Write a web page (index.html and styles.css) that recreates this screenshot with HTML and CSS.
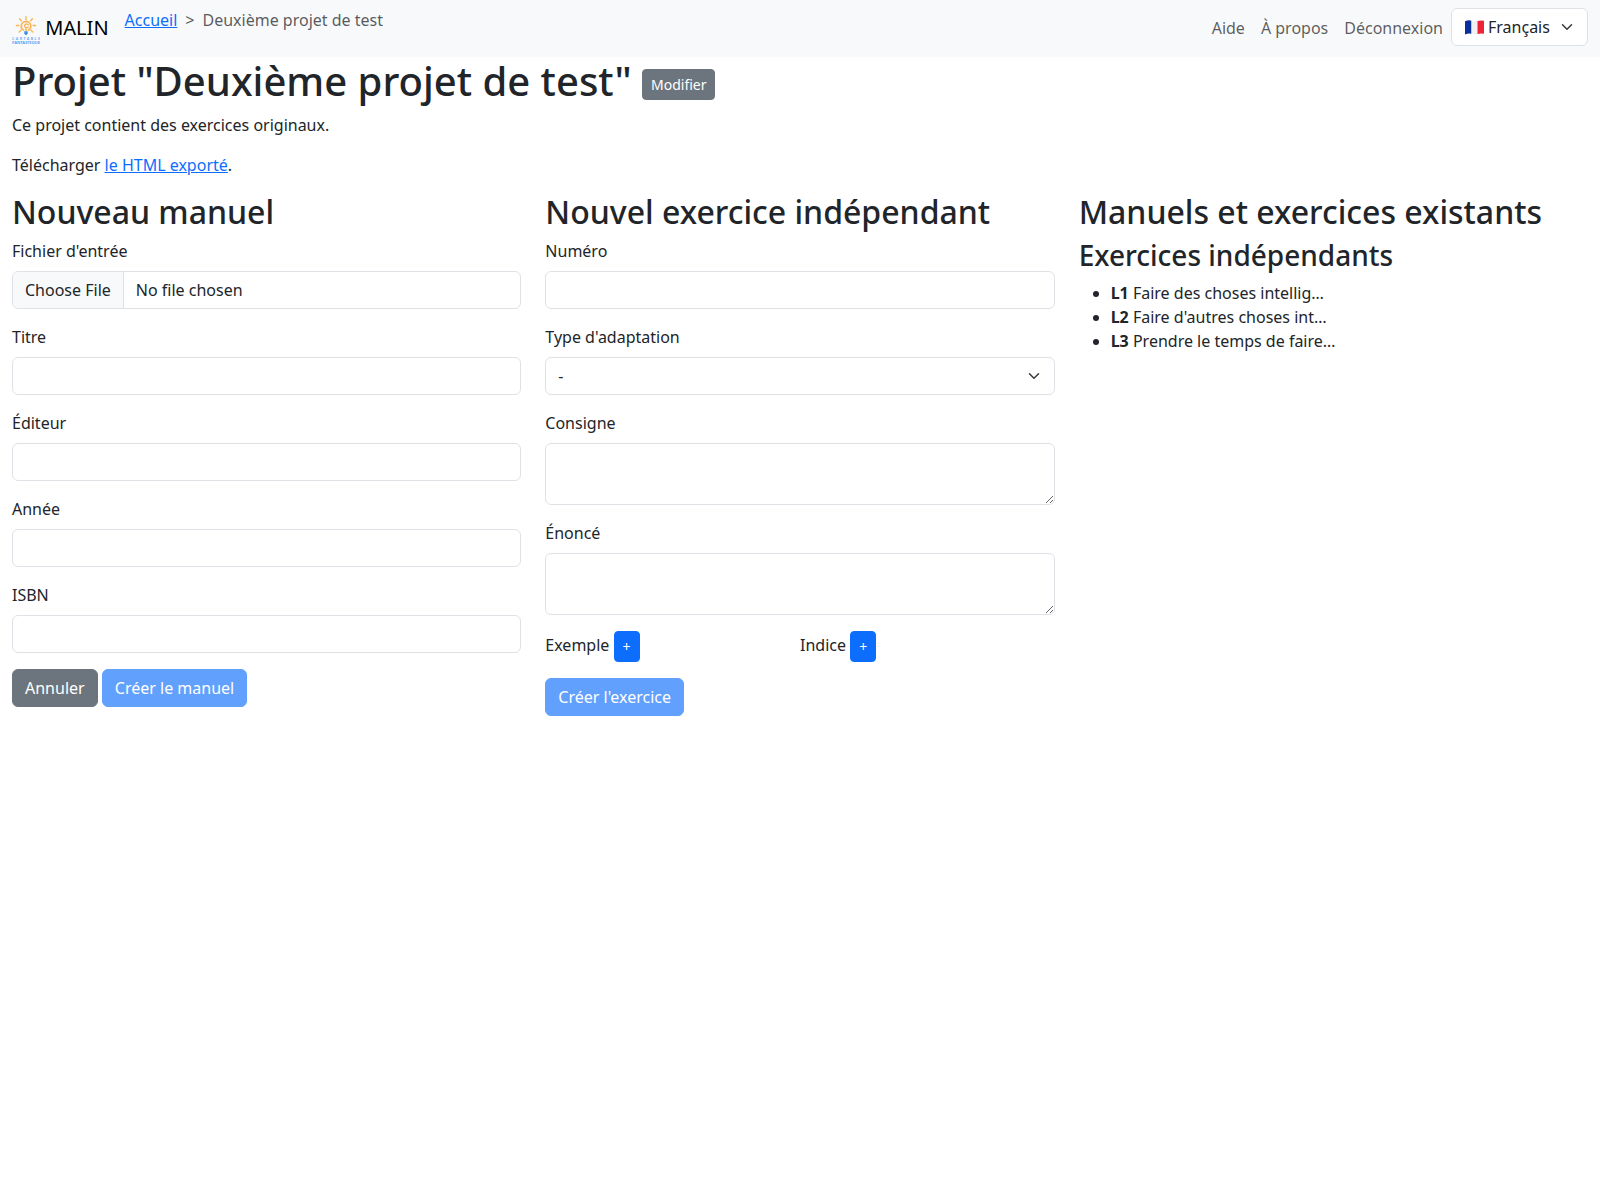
FILE: index.html
```html
<!DOCTYPE html>
<html lang="fr">
<head>
<meta charset="utf-8">
<title>MALIN</title>
<link rel="stylesheet" href="styles.css">
</head>
<body>
<nav class="navbar">
  <a class="brand" href="#"><svg class="logo" viewBox="0 0 28 28" aria-hidden="true">
    <g fill="none" stroke="#fbb454" stroke-width="1.4" stroke-linecap="round">
      <path d="M14 .7v3M7.600 2.800l1.700 1.900M20.400 2.800l-1.700 1.900M4.400 9.500h2.400M21.200 9.500h2.400M7.200 16l1.800-1.800M20.800 16l-1.800-1.800"/>
      <path stroke-width="1.600" d="M11.600 14.100c-3.800-2.200-3.100-8.400 2.400-8.600 5.500.2 6.200 6.400 2.400 8.600"/>
      <path d="M16.200 8.700c-1.300-1.400-3.700-.7-3.700 1.100s2.400 2.500 3.700 1.100M14 11.800v3"/>
    </g>
    <path fill="#3c91e8" d="M12.300 15.200h3.400v2l-1 1.700h-1.400l-1-1.700z"/>
    <g class="logo-text"><text class="light" x="0" y="24" textLength="28">CARTABLE</text>
    <text x="0" y="28" textLength="28" lengthAdjust="spacingAndGlyphs">FANTASTIQUE</text></g>
  </svg> MALIN</a>
  <ol class="breadcrumb">
    <li><a href="#">Accueil</a></li>
    <li class="current">Deuxième projet de test</li>
  </ol>
  <div class="nav-links">
    <a href="#">Aide</a>
    <a href="#">À propos</a>
    <a href="#">Déconnexion</a>
  </div>
  <button class="language" type="button"><svg class="flag" viewBox="0 0 19 15" aria-hidden="true">
    <path fill="#0a2f9c" d="M0 1.300Q3.500-.2 6.500.7V13.800Q3.500 13 0 14.500z"/>
    <path fill="#f2f2f4" d="M6.500.7Q9.500 1.700 12.500 1V14Q9.500 14.700 6.500 13.800z"/>
    <path fill="#ee2436" d="M12.500 1Q16 .2 19 .8V13.800Q16 13 12.500 14z"/>
  </svg><span>Français</span><svg class="chevron" viewBox="0 0 16 16" aria-hidden="true"><path d="m2 5 6 6 6-6"/></svg></button>
</nav>
<main>
  <h1>Projet "Deuxième projet de test" <button class="btn small secondary" type="button">Modifier</button></h1>
  <p>Ce projet contient des exercices originaux.</p>
  <p>Télécharger <a href="#">le HTML exporté</a>.</p>
  <div class="columns">
    <section>
      <h2>Nouveau manuel</h2>
      <div class="field"><label for="file">Fichier d'entrée</label><input class="control" id="file" type="file"></div>
      <div class="field"><label for="title">Titre</label><input class="control" id="title" type="text"></div>
      <div class="field"><label for="publisher">Éditeur</label><input class="control" id="publisher" type="text"></div>
      <div class="field"><label for="year">Année</label><input class="control" id="year" type="text"></div>
      <div class="field"><label for="isbn">ISBN</label><input class="control" id="isbn" type="text"></div>
      <button class="btn secondary" type="button">Annuler</button>
      <button class="btn primary" type="button" disabled>Créer le manuel</button>
    </section>
    <section>
      <h2>Nouvel exercice indépendant</h2>
      <div class="field"><label for="number">Numéro</label><input class="control" id="number" type="text"></div>
      <div class="field"><label for="adaptation">Type d'adaptation</label>
        <div class="select-wrap"><select class="control" id="adaptation"><option>-</option></select><svg class="chevron" viewBox="0 0 16 16" aria-hidden="true"><path d="m2 5 6 6 6-6"/></svg></div></div>
      <div class="field"><label for="instructions">Consigne</label><textarea class="control" id="instructions" rows="2"></textarea></div>
      <div class="field"><label for="wording">Énoncé</label><textarea class="control" id="wording" rows="2"></textarea></div>
      <div class="extras">
        <div>Exemple <button class="btn small primary" type="button">+</button></div>
        <div>Indice <button class="btn small primary" type="button">+</button></div>
      </div>
      <button class="btn primary" type="button" disabled>Créer l'exercice</button>
    </section>
    <section>
      <h2>Manuels et exercices existants</h2>
      <h3>Exercices indépendants</h3>
      <ul>
        <li><b>L1</b> Faire des choses intellig…</li>
        <li><b>L2</b> Faire d'autres choses int…</li>
        <li><b>L3</b> Prendre le temps de faire…</li>
      </ul>
    </section>
  </div>
</main>
</body>
</html>
```
FILE: styles.css
```css
*, *::before, *::after { box-sizing: border-box; }

body {
  margin: 0;
  background: #fff;
  color: #212529;
  font: 400 16px/1.5 "Noto Sans", "Liberation Sans", sans-serif;
}

a { color: #0d6efd; }
button, input, select, textarea { margin: 0; font: inherit; color: inherit; }

/* Navigation bar */
.navbar {
  display: flex;
  align-items: flex-start;
  height: 57px;
  padding: 8px 12px;
  background: #f8f9fa;
}
.brand {
  margin-right: 16px;
  padding: 5px 0;
  color: #000;
  font-size: 20px;
  line-height: 30px;
  text-decoration: none;
  white-space: nowrap;
}
.logo {
  width: 28px;
  height: 28px;
  vertical-align: middle;
}
.logo-text {
  fill: #55a3f5;
  font-size: 4px;
  font-weight: 700;
}
.logo-text .light { font-size: 3.6px; opacity: .85; }
.breadcrumb {
  display: flex;
  margin: 0;
  padding: 0;
  list-style: none;
}
.breadcrumb .current { color: rgba(33, 37, 41, .75); }
.breadcrumb .current::before { content: ">"; padding: 0 8px; }
.nav-links { display: flex; margin-left: auto; }
.nav-links a {
  padding: 8px;
  color: rgba(0, 0, 0, .65);
  text-decoration: none;
}
.language {
  display: flex;
  align-items: center;
  width: 137px;
  height: 38px;
  padding: 0 12px;
  border: 1px solid #dee2e6;
  border-radius: 6px;
  background: #fff;
}
.flag { width: 19px; height: 15px; margin: 0 4px 0 1px; }
.chevron {
  width: 16px;
  height: 12px;
  fill: none;
  stroke: #343a40;
  stroke-width: 2;
  stroke-linecap: round;
  stroke-linejoin: round;
}
.language .chevron { margin-left: auto; }

/* Page content */
main { padding: 0 12px; }
h1, h2, h3 { margin: 0 0 8px; font-weight: 500; line-height: 1.2; }
h1 { height: 48px; font-size: 40px; }
h1 .btn.small { margin-bottom: 2px; padding-right: 7px; }
h2 { font-size: 32px; }
h3 { font-size: 28px; }
p { margin: 0 0 16px; }
ul { margin: 0; padding-left: 32px; }
.columns { display: grid; grid-template-columns: repeat(3, 1fr); gap: 24px; }

/* Forms */
.field { margin-bottom: 16px; }
label { display: block; margin-bottom: 8px; }
.control {
  display: block;
  width: 100%;
  height: 38px;
  padding: 6px 12px;
  border: 1px solid #dee2e6;
  border-radius: 6px;
  background: #fff;
  appearance: none;
}
textarea.control { height: 62px; resize: vertical; }
input[type="file"] { overflow: hidden; }
.control::file-selector-button {
  margin: -6px 12px -6px -12px;
  padding: 6px 12px;
  border: 0 solid #dee2e6;
  border-right-width: 1px;
  border-radius: 0;
  background: #f8f9fa;
  color: #212529;
  font: inherit;
}
.select-wrap { display: grid; align-items: center; }
.select-wrap > * { grid-area: 1 / 1; }
.select-wrap .chevron { justify-self: end; margin-right: 13px; pointer-events: none; }
.extras { display: grid; grid-template-columns: 1fr 1fr; margin-bottom: 16px; }

/* Buttons */
.btn {
  display: inline-block;
  padding: 6px 12px;
  border: 1px solid;
  border-radius: 6px;
  color: #fff;
  font-weight: 400;
  line-height: 1.5;
  vertical-align: middle;
}
.btn.small { padding: 4px 8px; border-radius: 4px; font-size: 14px; }
.btn.secondary { border-color: #6c757d; background: #6c757d; }
.btn.primary { border-color: #0d6efd; background: #0d6efd; }
.btn:disabled { opacity: .65; }
```
